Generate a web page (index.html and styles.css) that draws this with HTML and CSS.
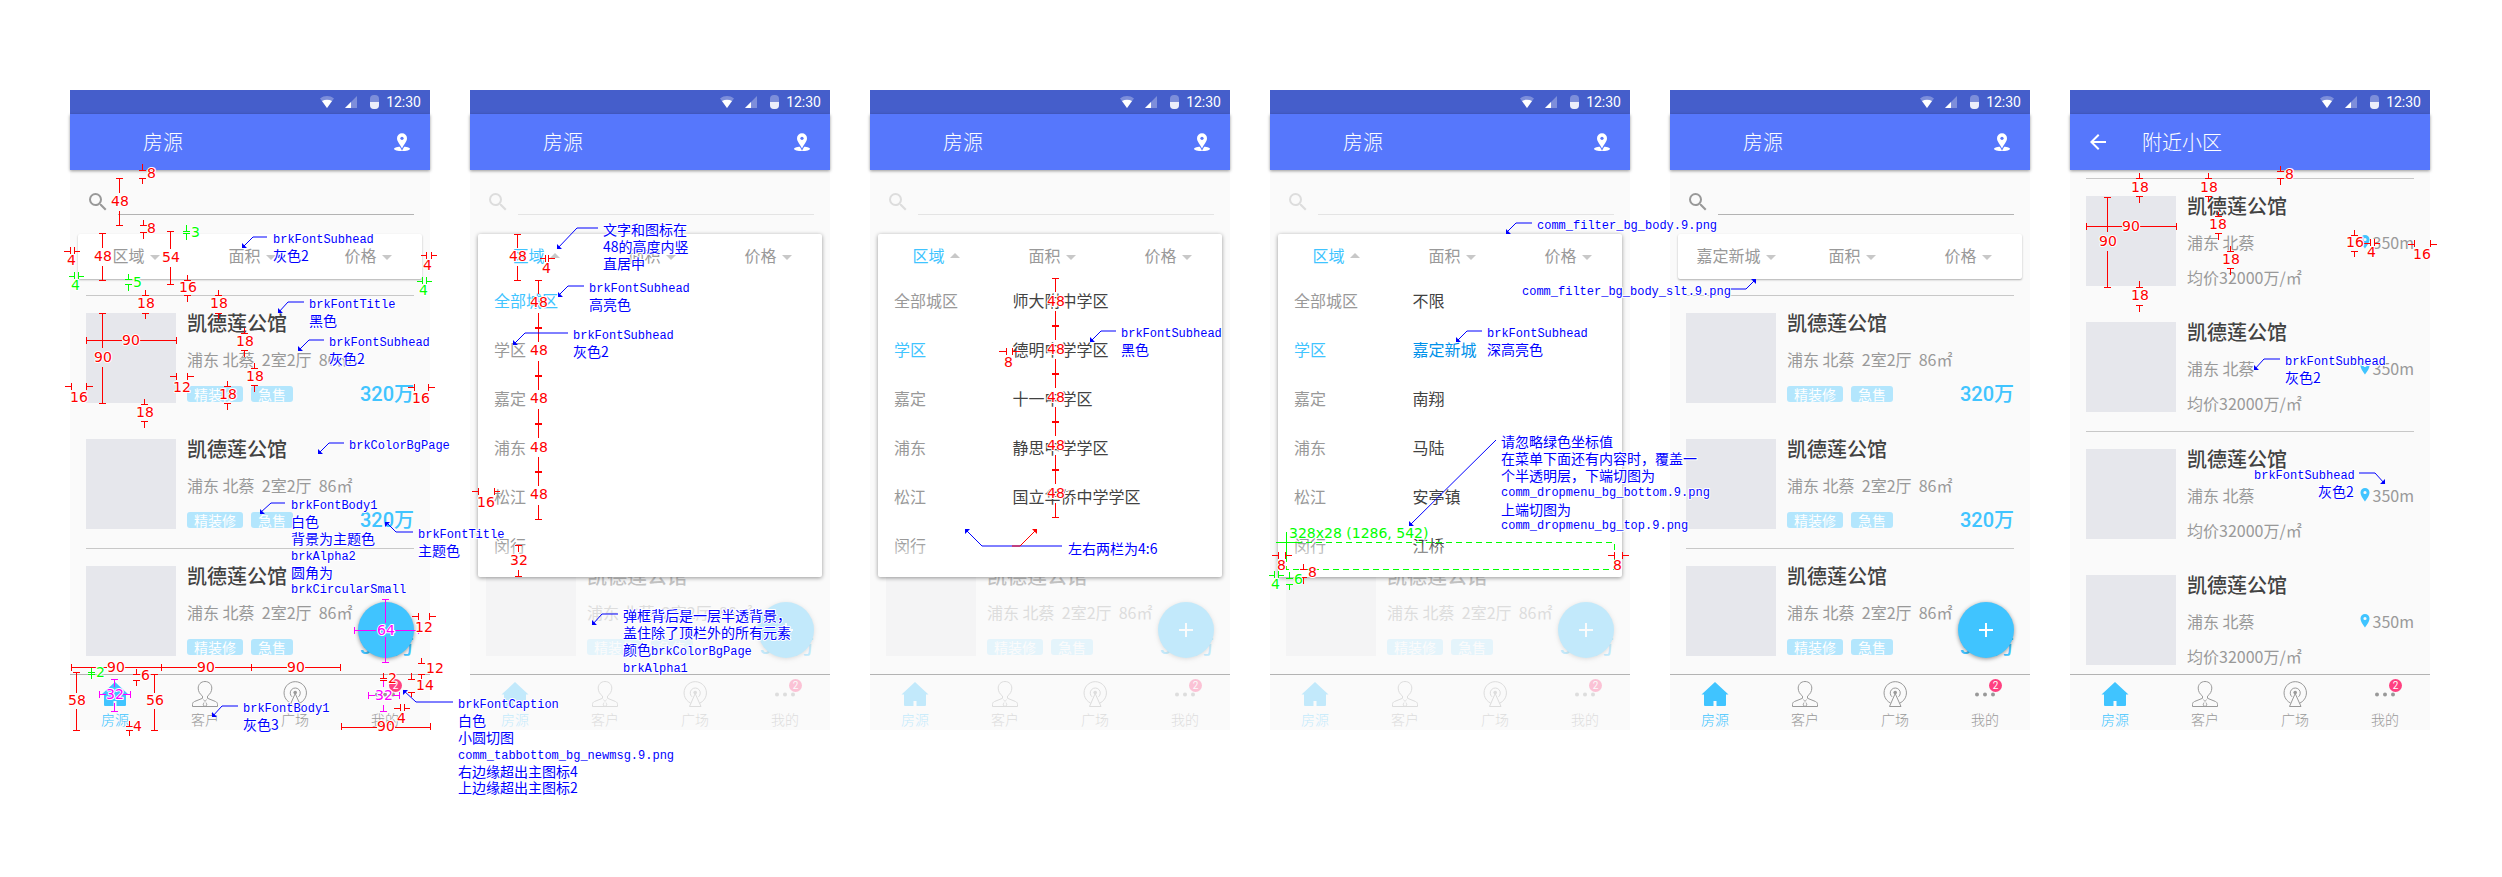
FILE: index.html
```html
<!DOCTYPE html>
<html lang="zh-CN">
<head>
<meta charset="utf-8">
<title>房源</title>
<link rel="stylesheet" href="styles.css">
</head>
<body>
<svg class="sprite" aria-hidden="true">
  <symbol id="i-wifi" viewBox="0 0 14 12"><path d="M0 2.500C4-.8 10-.8 14 2.500L7 12z" fill="#fff" fill-opacity=".3"/><path d="M2 5c3-1.800 7-1.800 10 0L7 12z" fill="#fff"/></symbol>
  <symbol id="i-signal" viewBox="0 0 12 12"><path d="M12 0v12H0z" fill="#fff" fill-opacity=".3"/><path d="M6 6v6H0z" fill="#fff"/></symbol>
  <symbol id="i-battery" viewBox="0 0 9 14"><rect width="9" height="14" rx="4" fill="#fff" fill-opacity=".3"/><path d="M0 7h9v3a4 4 0 0 1-4 4H4a4 4 0 0 1-4-4z" fill="#fff" fill-opacity=".85"/></symbol>
  <symbol id="i-map" viewBox="0 0 24 24"><ellipse cx="12" cy="18.800" rx="8" ry="2.300" fill="#fff"/><path d="M12 3.300a5 5 0 0 0-5 5C7 11.500 10 14.500 12 18.500c2-4 5-7 5-10.200a5 5 0 0 0-5-5z" fill="#fff" stroke="#5677fc" stroke-width="2" paint-order="stroke"/><circle cx="12" cy="8.300" r="1.600" fill="#5677fc"/></symbol>
  <symbol id="i-back" viewBox="0 0 24 24"><path d="M20 11H7.830l5.590-5.590L12 4l-8 8 8 8 1.410-1.410L7.830 13H20z" fill="#fff"/></symbol>
  <symbol id="i-search" viewBox="0 0 24 24"><path d="M15.500 14h-.79l-.28-.27A6.471 6.471 0 0 0 16 9.500 6.500 6.500 0 1 0 9.500 16c1.610 0 3.090-.59 4.230-1.570l.27.28v.79l5 4.990L20.490 19zm-6 0C7.010 14 5 11.990 5 9.500S7.010 5 9.500 5 14 7.010 14 9.500 11.990 14 9.500 14z" fill="#999"/></symbol>
  <symbol id="i-plus" viewBox="0 0 14 14"><path d="M6 0h2v6h6v2H8v6H6V8H0V6h6z" fill="#fff"/></symbol>
  <symbol id="i-pin" viewBox="0 0 10 14"><path d="M5 0a4.500 4.500 0 0 0-4.500 4.500C.5 8 5 13.500 5 13.500S9.500 8 9.500 4.500A4.500 4.500 0 0 0 5 0zm0 6.100a1.600 1.600 0 1 1 0-3.200 1.600 1.600 0 0 1 0 3.200z" fill="#40c4ff"/></symbol>
  <symbol id="i-home" viewBox="0 0 32 32"><path d="M16 4l13.500 12.500h-2.500V27a1 1 0 0 1-1 1h-8.500v-5h-3v5H6a1 1 0 0 1-1-1V16.500H2.500z" fill="#40c4ff"/></symbol>
  <symbol id="i-user" viewBox="0 0 32 32"><g fill="none" stroke="#999"><path d="M16 3.500c-4.300 0-6.800 3.200-6.800 6.600 0 3.200 1.600 6 4.300 8v2.200l-8 3.200c-1.400.6-2 1.600-2 3v2h25v-2c0-1.400-.6-2.400-2-3l-8-3.200v-2.200c2.700-2 4.300-4.800 4.300-8 0-3.400-2.500-6.600-6.800-6.600z"/><path d="M14.500 21.500l1.500 2 1.500-2M15 24.500l-1 2.500 2 1.500 2-1.500-1-2.500" stroke-width=".8"/></g></symbol>
  <symbol id="i-cast" viewBox="0 0 32 32"><g fill="none" stroke="#999"><path d="M11.500 25a11.200 11.200 0 1 1 9.500 0"/><path d="M13 18.800a5 5 0 1 1 6.500 0"/><path d="M16.200 15.500L10.500 28.500h11.500z"/></g><circle cx="16.200" cy="14.500" r="1.800" fill="#999"/></symbol>
  <symbol id="i-more" viewBox="0 0 32 32"><g fill="#999"><circle cx="8" cy="16.500" r="2"/><circle cx="16" cy="16.500" r="2"/><circle cx="24" cy="16.500" r="2"/></g></symbol>
</svg>
<main class="board">

<section class="phone">
  <div class="screen">
    <div class="status"><svg class="wifi"><use href="#i-wifi"/></svg><svg class="signal"><use href="#i-signal"/></svg><svg class="battery"><use href="#i-battery"/></svg><span>12:30</span></div>
    <header class="appbar"><h1>房源</h1><button class="icon-btn" aria-label="地图"><svg><use href="#i-map"/></svg></button></header>
    <div class="content">
      <label class="search"><svg><use href="#i-search"/></svg><input type="search" aria-label="搜索"></label>
      <div class="card"><div class="filters"><button>区域<i class="caret"></i></button><button>面积<i class="caret"></i></button><button>价格<i class="caret"></i></button></div></div>
      <ul class="list">
        <li class="row ruled"><div class="thumb"></div><div class="info"><h2>凯德莲公馆</h2><p>浦东 北蔡  2室2厅  86㎡</p><div class="foot"><span class="tag">精装修</span><span class="tag">急售</span><b class="price">320万</b></div></div></li>
        <li class="row"><div class="thumb"></div><div class="info"><h2>凯德莲公馆</h2><p>浦东 北蔡  2室2厅  86㎡</p><div class="foot"><span class="tag">精装修</span><span class="tag">急售</span><b class="price">320万</b></div></div></li>
        <li class="row ruled"><div class="thumb"></div><div class="info"><h2>凯德莲公馆</h2><p>浦东 北蔡  2室2厅  86㎡</p><div class="foot"><span class="tag">精装修</span><span class="tag">急售</span><b class="price">320万</b></div></div></li>
      </ul>
      <button class="fab" aria-label="新增"></button>
    </div>
    <nav class="tabs"><a class="on" href="#"><svg><use href="#i-home"/></svg>房源</a><a href="#"><svg><use href="#i-user"/></svg>客户</a><a href="#"><svg><use href="#i-cast"/></svg>广场</a><a href="#"><svg><use href="#i-more"/></svg><em class="badge">2</em>我的</a></nav>
  </div>
  <svg class="notes">
    <path class="green" d="M113 141h7M116 141v-6M113 143h7M116 143v7M-1 186h5M4 182v7M8 182v7M8 186h6M55 189h7M58 189v-5M55 194h7M58 194v7M347 191h5M352 187v7M356 187v7M356 191h6M18 582h7M18 584h7M21 577v12"/>
    <path class="red" d="M69 80h7M72 80v-6M69 88h7M72 88v6M46 88h7M49 88v15M49 121v14M46 135h7M70 135h7M73 135v-5M70 142h7M73 142v7M29 143h7M32 143v15M32 176v14M29 190h7M97 141h7M100 141v18M100 177v17M97 194h7M-6 161h6M0 157v7M4 157v7M4 161h6M114 190h7M117 190v-5M114 205h7M117 205v7M72 205h7M75 205v-5M72 223h7M75 223v6M145 205h7M148 205v-5M145 223h7M148 223v6M351 165h5M356 162v7M361 162v7M361 165h6"/>
    <path class="red" d="M29 223h7M32 223v35M32 277v36M29 313h7M16 247v7M16 250h36M70 250h36M106 247v7M171 243h7M174 243v-5M171 260h7M174 260v7M181 278h7M184 278v-5M181 295h7M184 295v7M154 296h7M157 296v-5M154 313h7M157 313v7M100 286h6M106 283v7M117 283v7M117 286h7M-5 296h6M1 293v7M16 293v7M16 296h7M71 314h7M74 314v-5M71 331h7M74 331v7M338 297h6M344 294v7M358 294v7M358 297h7"/>
    <path class="red" d="M342 526h6M348 523v7M359 523v7M359 526h7M348 573h7M351 573v-5M348 584h7M351 584v5M1 574v7M1 577h36M54 577h73M91 574v7M145 577h72M181 574v7M235 577h36M270 574v7M63 584h7M66 584v-5M63 590h7M66 590v6M3 582h7M6 582v21M6 619v21M3 640h7M81 584h7M84 584v19M84 619v21M81 640h7M56 636h7M59 636v-5M56 640h7M59 640v6M338 589h7M341 589v-6M338 602h7M341 602v5M310 588h7M310 590h7M313 588v-5M324 618h6M330 614v7M334 614v7M334 618h6M271 633v7M271 637h36M325 637h35M360 633v7"/>
    <path class="pink" d="M312 509h7M315 509v24M315 547v25M312 572h7M284 537v7M284 540h22M325 540h23M348 537v7M41 589h7M44 589v8M44 613v8M41 621h7M29 601v7M29 604h7M53 604h7M60 601v7M313 591v6M313 615v6M310 621h7M298 602v7M298 605h7M323 605h6M329 602v7"/>
    <g class="num gtext"><text x="121" y="147">3</text><text x="1" y="200">4</text><text x="63" y="197">5</text><text x="349" y="205">4</text><text x="26" y="587">2</text></g>
    <g class="num rtext"><text x="77" y="88">8</text><text x="41" y="116">48</text><text x="77" y="143">8</text><text x="24" y="171">48</text><text x="92" y="172">54</text><text x="-3" y="175">4</text><text x="109" y="202">16</text><text x="67" y="218">18</text><text x="140" y="218">18</text><text x="353" y="180">4</text><text x="24" y="272">90</text><text x="52" y="255">90</text><text x="166" y="256">18</text><text x="176" y="291">18</text><text x="149" y="309">18</text><text x="103" y="302">12</text><text x="0" y="312">16</text><text x="66" y="327">18</text><text x="342" y="313">16</text><text x="345" y="542">12</text><text x="356" y="583">12</text><text x="37" y="582">90</text><text x="127" y="582">90</text><text x="217" y="582">90</text><text x="71" y="590">6</text><text x="-2" y="615">58</text><text x="76" y="615">56</text><text x="63" y="641">4</text><text x="346" y="600">14</text><text x="318" y="593">2</text><text x="327" y="633">4</text><text x="307" y="641">90</text></g>
    <g class="num ptext"><text x="307" y="545">64</text><text x="36" y="609">32</text><text x="305" y="610">32</text></g>
    <path class="blue" d="M197 147H183L172 158M234 212H218L208 223M254 250H239L228 261M274 353H259L248 364M215 413H201L190 423M343 442H326L316 432M168 616H152L142 627M383 612H346L333 600"/>
    <path class="heads" d="M172 158v-5l5 5zM208 223v-5l5 5zM228 261v-5l5 5zM248 364v-5l5 5zM190 424v-5l5 5zM315 432h5l-5 5zM142 627v-5l5 5zM333 600h5l-5 5z"/>
    <g class="note"><text x="203" y="153">brkFontSubhead</text><text class="cn" x="203" y="171">灰色2</text><text x="239" y="218">brkFontTitle</text><text class="cn" x="239" y="236">黑色</text><text x="259" y="256">brkFontSubhead</text><text class="cn" x="259" y="274">灰色2</text><text x="279" y="359">brkColorBgPage</text><text x="221" y="419">brkFontBody1</text><text class="cn" x="221" y="437">白色</text><text class="cn" x="221" y="454">背景为主题色</text><text x="221" y="470">brkAlpha2</text><text class="cn" x="221" y="488">圆角为</text><text x="221" y="503">brkCircularSmall</text><text x="348" y="448">brkFontTitle</text><text class="cn" x="348" y="466">主题色</text><text x="173" y="622">brkFontBody1</text><text class="cn" x="173" y="640">灰色3</text><text x="388" y="618">brkFontCaption</text><text class="cn" x="388" y="636">白色</text><text class="cn" x="388" y="653">小圆切图</text><text x="388" y="669">comm_tabbottom_bg_newmsg.9.png</text><text class="cn" x="388" y="687">右边缘超出主图标4</text><text class="cn" x="388" y="703">上边缘超出主图标2</text></g>
  </svg>
</section>

<section class="phone">
  <div class="screen dimmed">
    <div class="status"><svg class="wifi"><use href="#i-wifi"/></svg><svg class="signal"><use href="#i-signal"/></svg><svg class="battery"><use href="#i-battery"/></svg><span>12:30</span></div>
    <header class="appbar"><h1>房源</h1><button class="icon-btn" aria-label="地图"><svg><use href="#i-map"/></svg></button></header>
    <div class="content">
      <label class="search"><svg><use href="#i-search"/></svg><input type="search" aria-label="搜索"></label>
      <div class="card open"><div class="filters"><button class="on">区域<i class="caret up"></i></button><button>面积<i class="caret"></i></button><button>价格<i class="caret"></i></button></div>
        <div class="menu"><div class="areas"><button class="on">全部城区</button><button>学区</button><button>嘉定</button><button>浦东</button><button>松江</button><button>闵行</button></div></div></div>
      <ul class="list under">
        <li class="row"><div class="thumb"></div><div class="info"><h2>凯德莲公馆</h2><p>浦东 北蔡  2室2厅  86㎡</p><div class="foot"><span class="tag">精装修</span><span class="tag">急售</span><b class="price">320万</b></div></div></li>
      </ul>
      <button class="fab" aria-label="新增"><svg><use href="#i-plus"/></svg></button>
    </div>
    <nav class="tabs"><a class="on" href="#"><svg><use href="#i-home"/></svg>房源</a><a href="#"><svg><use href="#i-user"/></svg>客户</a><a href="#"><svg><use href="#i-cast"/></svg>广场</a><a href="#"><svg><use href="#i-more"/></svg><em class="badge">2</em>我的</a></nav>
  </div>
  <svg class="notes">
    <path class="red" d="M44 144h7M47 144v14M47 176v14M44 190h7M70 168h5M75 165v7M78 165v7M78 168h7M2 401h6M8 398v7M24 398v7M24 401h6M45 455h7M48 455v7M48 480v6M45 486h7"/>
    <path class="red" d="M65 190h7M68 190v14M68 223v29M68 271v29M68 319v29M68 367v29M68 415v14M65 429h7"/>
    <path class="red thick" d="M65 238h7M65 286h7M65 334h7M65 382h7"/>
    <g class="num rtext"><text x="39" y="171">48</text><text x="72" y="183">4</text><text x="7" y="417">16</text><text x="40" y="475">32</text></g>
    <g class="num rtext strong"><text x="60" y="217">48</text><text x="60" y="265">48</text><text x="60" y="313">48</text><text x="60" y="362">48</text><text x="60" y="409">48</text></g>
    <path class="blue" d="M128 138H107L87 159M114 196H98L88 206M98 243H55L43 255M148 524H132L122 535"/>
    <path class="heads" d="M87 159v-5l5 5zM88 207v-5l5 5zM43 255v-5l5 5zM122 535v-5l5 5z"/>
    <g class="note"><text class="cn" x="133" y="145">文字和图标在</text><text class="cn" x="133" y="162">48的高度内竖</text><text class="cn" x="133" y="179">直居中</text><text x="119" y="202">brkFontSubhead</text><text class="cn" x="119" y="220">高亮色</text><text x="103" y="249">brkFontSubhead</text><text class="cn" x="103" y="267">灰色2</text><text class="cn" x="153" y="531">弹框背后是一层半透背景，</text><text class="cn" x="153" y="548">盖住除了顶栏外的所有元素</text><text x="153" y="565"><tspan class="cn">颜色</tspan>brkColorBgPage</text><text x="153" y="582">brkAlpha1</text></g>
  </svg>
</section>

<section class="phone">
  <div class="screen dimmed">
    <div class="status"><svg class="wifi"><use href="#i-wifi"/></svg><svg class="signal"><use href="#i-signal"/></svg><svg class="battery"><use href="#i-battery"/></svg><span>12:30</span></div>
    <header class="appbar"><h1>房源</h1><button class="icon-btn" aria-label="地图"><svg><use href="#i-map"/></svg></button></header>
    <div class="content">
      <label class="search"><svg><use href="#i-search"/></svg><input type="search" aria-label="搜索"></label>
      <div class="card open"><div class="filters"><button class="on">区域<i class="caret up"></i></button><button>面积<i class="caret"></i></button><button>价格<i class="caret"></i></button></div>
        <div class="menu"><div class="areas"><button>全部城区</button><button class="on">学区</button><button>嘉定</button><button>浦东</button><button>松江</button><button>闵行</button></div>
        <div class="places"><button>师大附中学区</button><button>德明中学学区</button><button>十一中学区</button><button>静思中学学区</button><button>国立华侨中学学区</button></div></div></div>
      <ul class="list under">
        <li class="row"><div class="thumb"></div><div class="info"><h2>凯德莲公馆</h2><p>浦东 北蔡  2室2厅  86㎡</p><div class="foot"><span class="tag">精装修</span><span class="tag">急售</span><b class="price">320万</b></div></div></li>
      </ul>
      <button class="fab" aria-label="新增"><svg><use href="#i-plus"/></svg></button>
    </div>
    <nav class="tabs"><a class="on" href="#"><svg><use href="#i-home"/></svg>房源</a><a href="#"><svg><use href="#i-user"/></svg>客户</a><a href="#"><svg><use href="#i-cast"/></svg>广场</a><a href="#"><svg><use href="#i-more"/></svg><em class="badge">2</em>我的</a></nav>
  </div>
  <svg class="notes">
    <path class="red" d="M182 188h7M185 188v14M185 221v29M185 269v29M185 317v29M185 365v29M185 413v14M182 427h7M129 261h7M136 258v7M142 258v7M142 261h8"/>
    <path class="red thick" d="M182 236h7M182 284h7M182 332h7M182 380h7"/>
    <g class="num rtext strong"><text x="177" y="216">48</text><text x="177" y="264">48</text><text x="177" y="312">48</text><text x="177" y="360">48</text><text x="177" y="408">48</text></g>
    <g class="num rtext"><text x="134" y="277">8</text></g>
    <path class="blue" d="M246 241H231L220 252M192 456H112L95 439"/>
    <path class="red slant" d="M142 456H150L167 439"/>
    <path class="heads" d="M220 252v-5l5 5zM95 439h5l-5 5z"/>
    <path class="rhead" d="M167 439h-5l5 5z"/>
    <g class="note"><text x="251" y="247">brkFontSubhead</text><text class="cn" x="251" y="265">黑色</text><text class="cn" x="198" y="464">左右两栏为4:6</text></g>
  </svg>
</section>

<section class="phone">
  <div class="screen dimmed">
    <div class="status"><svg class="wifi"><use href="#i-wifi"/></svg><svg class="signal"><use href="#i-signal"/></svg><svg class="battery"><use href="#i-battery"/></svg><span>12:30</span></div>
    <header class="appbar"><h1>房源</h1><button class="icon-btn" aria-label="地图"><svg><use href="#i-map"/></svg></button></header>
    <div class="content">
      <label class="search"><svg><use href="#i-search"/></svg><input type="search" aria-label="搜索"></label>
      <div class="card open"><div class="filters"><button class="on">区域<i class="caret up"></i></button><button>面积<i class="caret"></i></button><button>价格<i class="caret"></i></button></div>
        <div class="menu"><div class="areas"><button>全部城区</button><button class="on">学区</button><button>嘉定</button><button>浦东</button><button>松江</button><button>闵行</button></div>
        <div class="places"><button>不限</button><button class="on">嘉定新城</button><button>南翔</button><button>马陆</button><button>安亭镇</button><button>江桥</button></div></div></div>
      <ul class="list under">
        <li class="row"><div class="thumb"></div><div class="info"><h2>凯德莲公馆</h2><p>浦东 北蔡  2室2厅  86㎡</p><div class="foot"><span class="tag">精装修</span><span class="tag">急售</span><b class="price">320万</b></div></div></li>
      </ul>
      <button class="fab" aria-label="新增"><svg><use href="#i-plus"/></svg></button>
    </div>
    <nav class="tabs"><a class="on" href="#"><svg><use href="#i-home"/></svg>房源</a><a href="#"><svg><use href="#i-user"/></svg>客户</a><a href="#"><svg><use href="#i-cast"/></svg>广场</a><a href="#"><svg><use href="#i-more"/></svg><em class="badge">2</em>我的</a></nav>
  </div>
  <svg class="notes">
    <path class="green dash" d="M16 452H344V479H16z"/>
    <path class="green" d="M6 452h26M16 442v23M-1 485h5M4 481v7M8 481v7M8 485h6M16 488h7M19 488v-6M16 494h7M19 494v6"/>
    <path class="red" d="M2 465h6M8 462v7M15 462v7M15 465h7M338 465h6M344 462v7M352 462v7M352 465h7M30 479h7M33 479v-5M30 487h7M33 487v7"/>
    <g class="num gtext"><text x="19" y="448">328x28 (1286, 542)</text><text x="1" y="499">4</text><text x="24" y="494">6</text></g>
    <g class="num rtext"><text x="7" y="480">8</text><text x="343" y="480">8</text><text x="38" y="487">8</text></g>
    <path class="blue" d="M262 133H246L236 143M212 241H197L186 252M226 350L139 436"/>
    <path class="heads" d="M236 144v-5l5 5zM186 252v-5l5 5zM139 436v-5l5 5z"/>
    <g class="note"><text x="267" y="139">comm_filter_bg_body.9.png</text><text x="252" y="205">comm_filter_bg_body_slt.9.png</text><text x="217" y="247">brkFontSubhead</text><text class="cn" x="217" y="265">深高亮色</text><text class="cn" x="231" y="357">请忽略绿色坐标值</text><text class="cn" x="231" y="374">在菜单下面还有内容时，覆盖一</text><text class="cn" x="231" y="391">个半透明层，下端切图为</text><text x="231" y="406">comm_dropmenu_bg_bottom.9.png</text><text class="cn" x="231" y="425">上端切图为</text><text x="231" y="439">comm_dropmenu_bg_top.9.png</text></g>
  </svg>
</section>

<section class="phone">
  <div class="screen">
    <div class="status"><svg class="wifi"><use href="#i-wifi"/></svg><svg class="signal"><use href="#i-signal"/></svg><svg class="battery"><use href="#i-battery"/></svg><span>12:30</span></div>
    <header class="appbar"><h1>房源</h1><button class="icon-btn" aria-label="地图"><svg><use href="#i-map"/></svg></button></header>
    <div class="content">
      <label class="search"><svg><use href="#i-search"/></svg><input type="search" aria-label="搜索"></label>
      <div class="card"><div class="filters"><button>嘉定新城<i class="caret"></i></button><button>面积<i class="caret"></i></button><button>价格<i class="caret"></i></button></div></div>
      <ul class="list">
        <li class="row ruled"><div class="thumb"></div><div class="info"><h2>凯德莲公馆</h2><p>浦东 北蔡  2室2厅  86㎡</p><div class="foot"><span class="tag">精装修</span><span class="tag">急售</span><b class="price">320万</b></div></div></li>
        <li class="row"><div class="thumb"></div><div class="info"><h2>凯德莲公馆</h2><p>浦东 北蔡  2室2厅  86㎡</p><div class="foot"><span class="tag">精装修</span><span class="tag">急售</span><b class="price">320万</b></div></div></li>
        <li class="row ruled"><div class="thumb"></div><div class="info"><h2>凯德莲公馆</h2><p>浦东 北蔡  2室2厅  86㎡</p><div class="foot"><span class="tag">精装修</span><span class="tag">急售</span><b class="price">320万</b></div></div></li>
      </ul>
      <button class="fab" aria-label="新增"><svg><use href="#i-plus"/></svg></button>
    </div>
    <nav class="tabs"><a class="on" href="#"><svg><use href="#i-home"/></svg>房源</a><a href="#"><svg><use href="#i-user"/></svg>客户</a><a href="#"><svg><use href="#i-cast"/></svg>广场</a><a href="#"><svg><use href="#i-more"/></svg><em class="badge">2</em>我的</a></nav>
  </div>
  <svg class="notes">
    <path class="blue" d="M61 199H76L86 189"/>
    <path class="heads" d="M86 189h-5l5 5z"/>
  </svg>
</section>

<section class="phone">
  <div class="screen">
    <div class="status"><svg class="wifi"><use href="#i-wifi"/></svg><svg class="signal"><use href="#i-signal"/></svg><svg class="battery"><use href="#i-battery"/></svg><span>12:30</span></div>
    <header class="appbar nested"><button class="icon-btn" aria-label="返回"><svg><use href="#i-back"/></svg></button><h1>附近小区</h1></header>
    <div class="content">
      <ul class="list nearby">
        <li class="row ruled"><div class="thumb"></div><div class="info"><h2>凯德莲公馆</h2><p>浦东 北蔡<span class="away"><svg><use href="#i-pin"/></svg>350m</span></p><div class="foot">均价32000万/㎡</div></div></li>
        <li class="row"><div class="thumb"></div><div class="info"><h2>凯德莲公馆</h2><p>浦东 北蔡<span class="away"><svg><use href="#i-pin"/></svg>350m</span></p><div class="foot">均价32000万/㎡</div></div></li>
        <li class="row ruled"><div class="thumb"></div><div class="info"><h2>凯德莲公馆</h2><p>浦东 北蔡<span class="away"><svg><use href="#i-pin"/></svg>350m</span></p><div class="foot">均价32000万/㎡</div></div></li>
        <li class="row"><div class="thumb"></div><div class="info"><h2>凯德莲公馆</h2><p>浦东 北蔡<span class="away"><svg><use href="#i-pin"/></svg>350m</span></p><div class="foot">均价32000万/㎡</div></div></li>
      </ul>
    </div>
    <nav class="tabs"><a class="on" href="#"><svg><use href="#i-home"/></svg>房源</a><a href="#"><svg><use href="#i-user"/></svg>客户</a><a href="#"><svg><use href="#i-cast"/></svg>广场</a><a href="#"><svg><use href="#i-more"/></svg><em class="badge">2</em>我的</a></nav>
  </div>
  <svg class="notes">
    <path class="red" d="M207 81h7M210 81v-5M207 88h7M210 88v7M66 88h7M69 88v-5M66 106h7M69 106v7M135 88h7M138 88v-5M135 106h7M138 106v6M34 107h7M37 107v35M37 161v36M34 197h7M16 133v7M16 136h36M70 136h36M106 133v7M145 126h7M148 126v-4M145 143h7M148 143v7M157 161h7M160 161v-5M157 178h7M160 178v7M66 197h7M69 197v-6M66 215h7M69 215v7M281 145h7M284 145v-5M281 161h7M284 161v6M294 153h6M300 149v7M304 149v7M304 153h6M338 154h6M344 150v7M360 150v7M360 154h7"/>
    <g class="num rtext"><text x="215" y="89">8</text><text x="61" y="102">18</text><text x="130" y="102">18</text><text x="29" y="156">90</text><text x="52" y="141">90</text><text x="139" y="139">18</text><text x="152" y="174">18</text><text x="61" y="210">18</text><text x="276" y="157">16</text><text x="297" y="167">4</text><text x="343" y="169">16</text></g>
    <path class="blue" d="M210 269H194L184 280M289 383H305L315 394"/>
    <path class="heads" d="M184 280v-5l5 5zM315 394h-5l5-5z"/>
    <g class="note"><text x="215" y="275">brkFontSubhead</text><text class="cn" x="215" y="293">灰色2</text><text x="184" y="389">brkFontSubhead</text><text class="cn" x="248" y="407">灰色2</text></g>
  </svg>
</section>

</main>
</body>
</html>
```
FILE: styles.css
```css
* { box-sizing: border-box; }
body { margin: 0; background: #fff; color: #999; font: 16px/16px "Noto Sans CJK SC", sans-serif; }
h1, h2, p, ul { margin: 0; padding: 0; font-weight: 400; }
ul { list-style: none; }
button { border: 0; padding: 0; background: none; font: inherit; color: inherit; cursor: pointer; }
a { color: inherit; text-decoration: none; }
svg { display: block; flex: none; }
.sprite { position: absolute; width: 0; height: 0; }

.board { display: grid; grid-template-columns: repeat(6, minmax(360px, 1fr)); gap: 40px; padding: 90px 72px 120px 70px; }
.phone { position: relative; }
.screen { position: relative; isolation: isolate; display: flex; flex-direction: column; min-height: 640px; background: #fafafa; }

.status { display: flex; align-items: center; justify-content: flex-end; height: 24px; padding-right: 9px; background: #455ecb; color: #fff; font: 14px/24px Roboto, sans-serif; }
.wifi { width: 14px; height: 12px; margin-right: 11px; }
.signal { width: 12px; height: 12px; margin-right: 13px; }
.battery { width: 9px; height: 14px; margin-right: 7px; }

.appbar { position: relative; z-index: 3; display: flex; align-items: center; height: 56px; padding: 0 16px 0 73px; background: #5677fc; color: #fff; box-shadow: 0 1px 3px rgba(0, 0, 0, .4); }
.appbar.nested { padding-left: 16px; gap: 32px; }
.appbar h1 { flex: 1; font-size: 20px; line-height: 24px; font-weight: 300; }
.icon-btn svg { width: 24px; height: 24px; }

.content { position: relative; flex: 1; }
.search { display: flex; align-items: flex-end; gap: 8px; padding: 8px 16px 19px; }
.search svg { width: 24px; height: 24px; margin-bottom: 1px; }
.search input { flex: 1; min-width: 0; height: 37px; padding: 0; border: 0; border-bottom: 1px solid #b3b3b3; border-radius: 0; background: none; font: inherit; color: #424242; outline: 0; }

.card { margin: 0 8px 15px; border-radius: 2px; background: #fff; box-shadow: 0 1px 2px rgba(0, 0, 0, .3); }
.card.open { position: relative; z-index: 2; margin-bottom: 0; box-shadow: 0 1px 4px rgba(0, 0, 0, .4); }
.filters { display: grid; grid-template-columns: repeat(3, 1fr); height: 45px; margin-right: -4px; padding-bottom: 3px; }
.filters button { display: flex; align-items: center; justify-content: center; gap: 5px; }
.caret { border: 5px solid transparent; border-top-color: #c8c8c8; border-bottom: 0; margin-top: 4px; }
.caret.up { border-top: 0; border-bottom: 5px solid #c8c8c8; margin-top: 0; }
.on { color: #40c4ff; }
.menu { position: relative; display: grid; grid-template-columns: 4fr 6fr; margin-top: -4px; padding-right: 8px; padding-bottom: 8px; }
.menu::after { content: ""; position: absolute; left: 8px; right: 8px; bottom: 8px; height: 28px; background: linear-gradient(rgba(255, 255, 255, 0), #fff); pointer-events: none; }
.areas, .places { display: flex; flex-direction: column; }
.menu button { height: 49px; text-align: left; }
.areas button { padding-left: 16px; }
.places { color: #424242; }
.places .on { color: #0091ea; }

.list { display: flow-root; padding: 0 16px; }
.nearby { padding-top: 7px; }
.row { display: flex; gap: 11px; padding: 18px 0; }
.row.ruled { margin-top: 1px; padding-top: 17px; border-top: 1px solid #c8c8c8; }
.nearby .row:last-child { padding-bottom: 9px; }
.under { margin-top: -29px; }
.thumb { flex: none; width: 90px; height: 90px; background: #e6e7ec; }
.info { flex: 1; display: flex; flex-direction: column; gap: 18px; min-width: 0; }
.info h2 { font-size: 20px; line-height: 20px; font-weight: 500; color: #424242; }
.info p { display: flex; white-space: pre; }
.foot { display: flex; align-items: center; gap: 8px; height: 18px; }
.tag { padding: 0 7px; border-radius: 3px; background: #b3e6fd; color: #fff; font-size: 14px; line-height: 16px; }
.price { margin-left: auto; color: #40c4ff; font: 500 20px/18px Roboto, "Noto Sans CJK SC", sans-serif; }
.away { display: flex; align-items: center; gap: 3px; margin-left: auto; }
.away svg { width: 10px; height: 14px; }

.fab { position: absolute; right: 16px; bottom: 16px; display: grid; place-items: center; width: 56px; height: 56px; border-radius: 50%; background: #40c4ff; box-shadow: 0 1px 4px rgba(0, 0, 0, .4); }
.fab svg { width: 14px; height: 14px; }

.tabs { display: grid; grid-template-columns: repeat(4, 1fr); border-top: 1px solid #b3b3b3; background: #fafafa; font-size: 14px; line-height: 14px; font-weight: 300; }
.tabs a { position: relative; display: flex; flex-direction: column; align-items: center; gap: 2px; padding: 3px 0 4px; }
.tabs svg { width: 32px; height: 32px; }
.badge { position: absolute; top: 4px; left: 50%; width: 13px; height: 13px; margin-left: 4px; border-radius: 50%; background: #ff4081; color: #fff; font: 10px/13px Roboto, sans-serif; text-align: center; }

/* Translucent page colour over everything below the app bar */
.dimmed .content::before, .dimmed .tabs::after { content: ""; position: absolute; inset: 0; z-index: 1; background: rgba(250, 250, 250, .7); }
.dimmed .tabs { position: relative; }

/* Redline layer */
.notes { position: absolute; top: 0; left: 0; z-index: 5; width: 360px; height: 640px; overflow: visible; pointer-events: none; }
.notes path { fill: none; stroke-width: 1; }
.notes .red, .notes .green, .notes .pink { shape-rendering: crispEdges; }
.notes .red { stroke: #f00; }
.notes .green { stroke: #0f0; }
.notes .pink { stroke: #f0f; }
.notes .blue { stroke: #00f; }
.notes .thick { stroke-width: 2; }
.notes .slant { shape-rendering: auto; }
.notes .dash { stroke-dasharray: 6 4; }
.notes .heads { fill: #00f; }
.notes .rhead { fill: #f00; }
.notes text { stroke: #fff; stroke-width: 2; stroke-linejoin: round; paint-order: stroke; }
.num { font: 14px "DejaVu Sans", sans-serif; }
.strong { font-weight: 400; }
.rtext { fill: #f00; }
.gtext { fill: #0f0; }
.ptext { fill: #f0f; }
.note { fill: #00f; font: 12px "Liberation Mono", monospace; }
.cn { font: 14px "Noto Sans CJK SC", sans-serif; }
```
